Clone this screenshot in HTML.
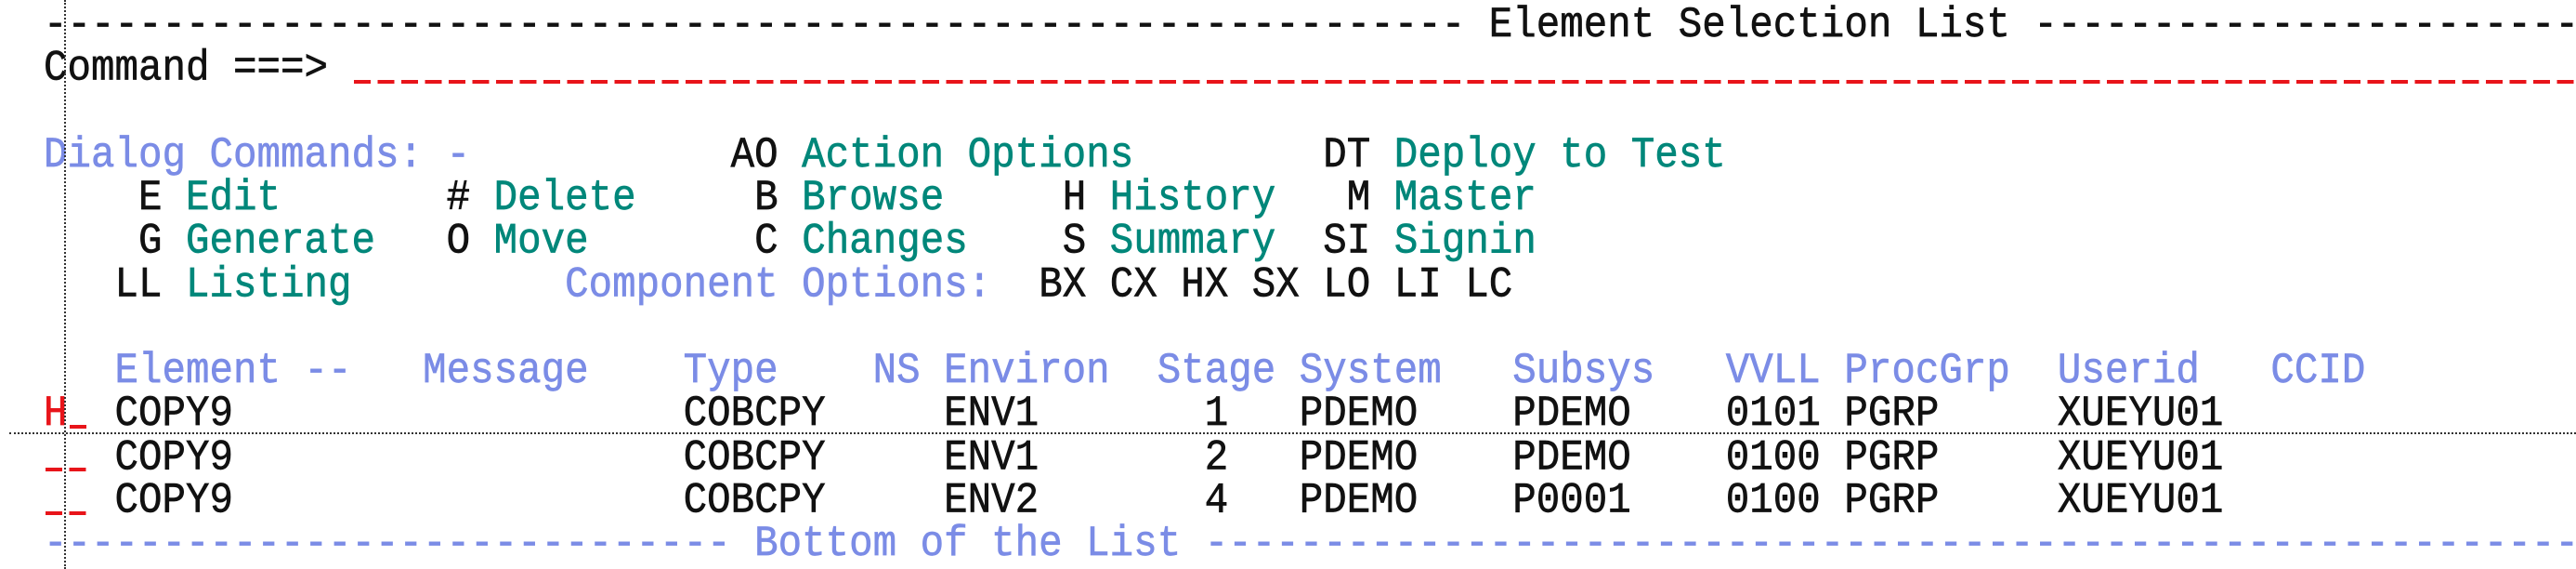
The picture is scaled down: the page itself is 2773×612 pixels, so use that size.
<!DOCTYPE html>
<html><head><meta charset="utf-8"><style>
html,body{margin:0;padding:0;background:#fff;width:2773px;height:612px;overflow:hidden;position:relative}
pre{position:absolute;left:47px;top:4px;margin:0;font-family:"Liberation Mono",monospace;font-size:42.5px;line-height:42.27px;color:#111;white-space:pre;width:2726px;overflow:hidden;transform:scaleY(1.1);transform-origin:0 0;-webkit-text-stroke:0.6px currentColor}
.b{color:#7b8ce6}.t{color:#00877a}.r{color:#e8141a}
.vl{position:absolute;left:69px;top:0;height:612px;border-left:2px dotted #333}
.hl{position:absolute;left:10px;top:465px;width:2763px;border-top:2px dotted #333}
.u{position:absolute;height:4px;background:repeating-linear-gradient(90deg,#e8141a 0 18px,transparent 18px 25.5px)}
</style></head><body>
<pre>------------------------------------------------------------ Element Selection List ------------------------------------------------------------
Command ===>

<span class="b">Dialog Commands: -</span>           AO <span class="t">Action Options</span>        DT <span class="t">Deploy to Test</span>
    E <span class="t">Edit</span>       # <span class="t">Delete</span>     B <span class="t">Browse</span>     H <span class="t">History</span>   M <span class="t">Master</span>
    G <span class="t">Generate</span>   O <span class="t">Move</span>       C <span class="t">Changes</span>    S <span class="t">Summary</span>  SI <span class="t">Signin</span>
   LL <span class="t">Listing</span>         <span class="b">Component Options:</span>  BX CX HX SX LO LI LC

<span class="b">   Element --   Message    Type    NS Environ  Stage System   Subsys   VVLL ProcGrp  Userid   CCID</span>
<span class="r">H</span>  COPY9                   COBCPY     ENV1       1   PDEMO    PDEMO    0101 PGRP     XUEYU01
   COPY9                   COBCPY     ENV1       2   PDEMO    PDEMO    0100 PGRP     XUEYU01
   COPY9                   COBCPY     ENV2       4   PDEMO    P0001    0100 PGRP     XUEYU01
<span class="b">----------------------------- Bottom of the List ------------------------------------------------------------------------</span></pre>
<div class="u" style="left:381px;top:86px;width:2392px"></div>
<div class="u" style="left:75px;top:457px;width:22px"></div>
<div class="u" style="left:49px;top:503px;width:48px"></div>
<div class="u" style="left:49px;top:550px;width:48px"></div>
<div class="vl"></div><div class="hl"></div>
</body></html>
